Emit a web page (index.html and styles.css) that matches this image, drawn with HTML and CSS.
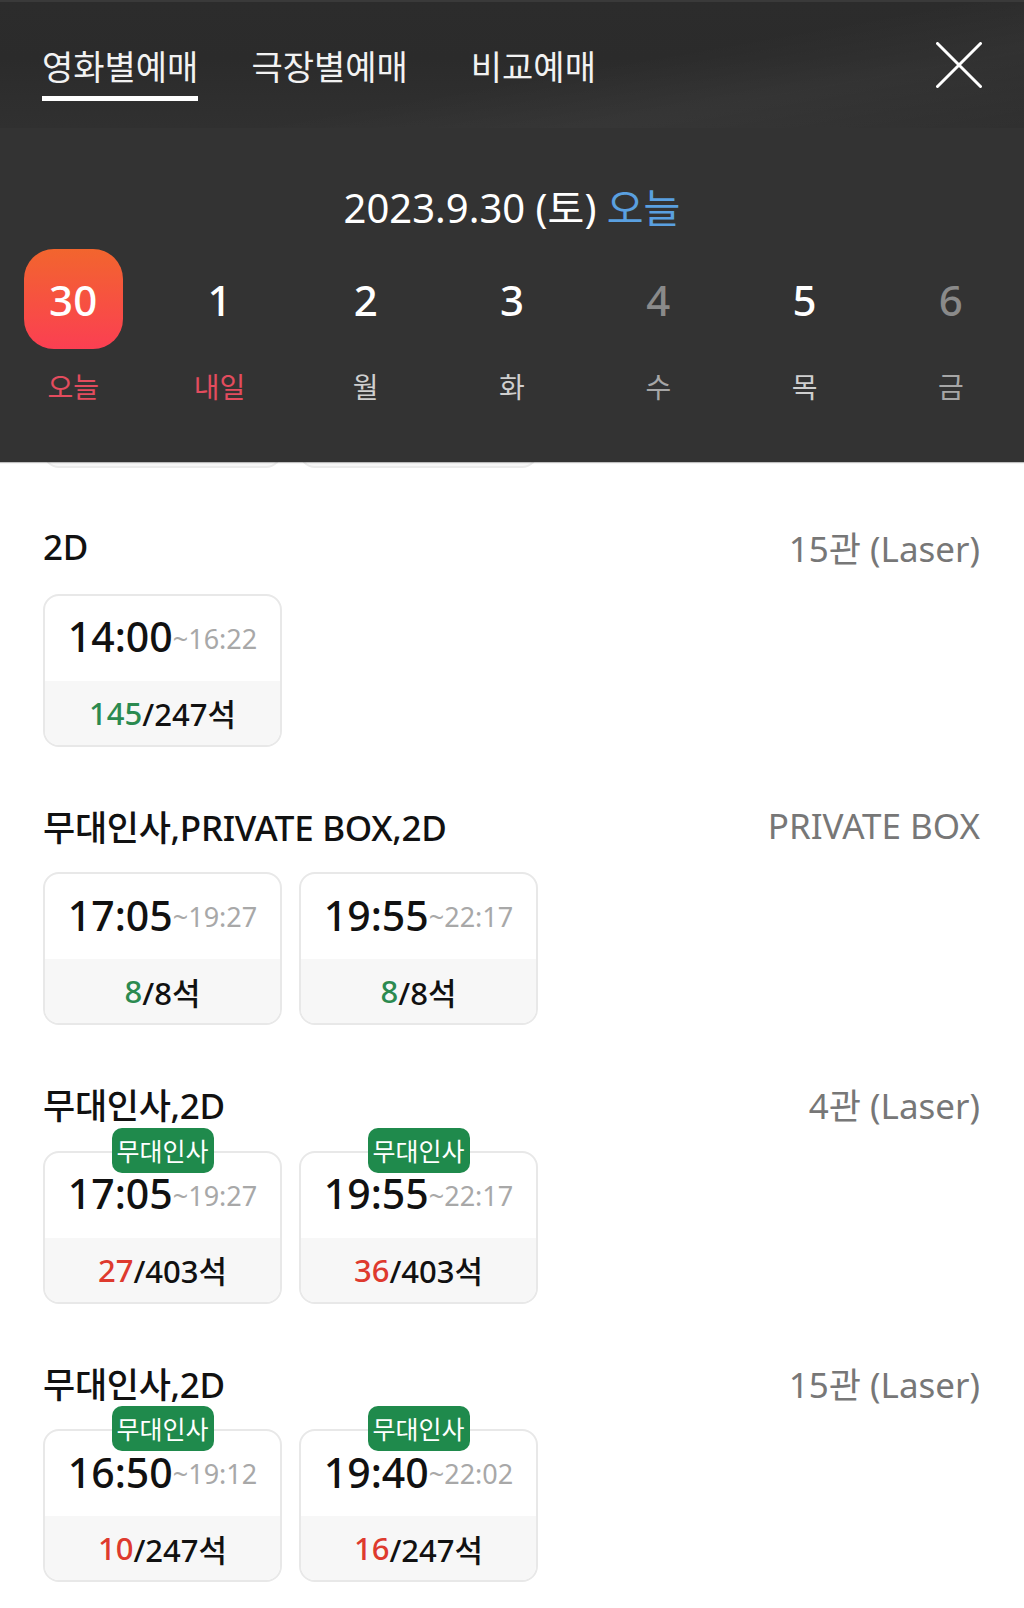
FILE: index.html
```html
<!DOCTYPE html>
<html lang="ko">
<head>
<meta charset="utf-8">
<title>영화별예매</title>
<link rel="stylesheet" href="styles.css">
</head>
<body>
<header class="top">
  <nav class="tabs">
    <a class="tab active">영화별예매</a>
    <a class="tab">극장별예매</a>
    <a class="tab tab-compare">비교예매</a>
    <button class="close" aria-label="닫기">
      <svg width="46" height="46" viewBox="0 0 46 46"><path d="M1.5 1.5 L44.5 44.5 M44.5 1.5 L1.5 44.5" stroke="#fff" stroke-width="3" stroke-linecap="round" fill="none"/></svg>
    </button>
  </nav>
  <div class="date-panel">
    <div class="date-title">2023.9.30 (토) <span class="today">오늘</span></div>
    <ul class="days">
      <li class="day"><span class="num selected">30</span><span class="lbl red">오늘</span></li>
      <li class="day"><span class="num">1</span><span class="lbl red">내일</span></li>
      <li class="day"><span class="num">2</span><span class="lbl">월</span></li>
      <li class="day"><span class="num">3</span><span class="lbl">화</span></li>
      <li class="day off"><span class="num">4</span><span class="lbl">수</span></li>
      <li class="day"><span class="num">5</span><span class="lbl">목</span></li>
      <li class="day off"><span class="num">6</span><span class="lbl">금</span></li>
    </ul>
  </div>
</header>

<main class="content">
  <div class="peek">
    <div class="peek-card"></div>
    <div class="peek-card"></div>
  </div>

  <section class="group">
    <div class="group-head"><h2 class="group-title">2D</h2><span class="hall">15관 (Laser)</span></div>
    <div class="slots">
      <div class="slot">
        <div class="slot-time"><span class="start">14:00</span><span class="end">~16:22</span></div>
        <div class="slot-seat"><span class="avail green">145</span>/247석</div>
      </div>
    </div>
  </section>

  <section class="group">
    <div class="group-head"><h2 class="group-title">무대인사,PRIVATE BOX,2D</h2><span class="hall">PRIVATE BOX</span></div>
    <div class="slots">
      <div class="slot">
        <div class="slot-time"><span class="start">17:05</span><span class="end">~19:27</span></div>
        <div class="slot-seat"><span class="avail green">8</span>/8석</div>
      </div>
      <div class="slot">
        <div class="slot-time"><span class="start">19:55</span><span class="end">~22:17</span></div>
        <div class="slot-seat"><span class="avail green">8</span>/8석</div>
      </div>
    </div>
  </section>

  <section class="group">
    <div class="group-head"><h2 class="group-title">무대인사,2D</h2><span class="hall">4관 (Laser)</span></div>
    <div class="slots">
      <div class="slot">
        <span class="badge">무대인사</span>
        <div class="slot-time"><span class="start">17:05</span><span class="end">~19:27</span></div>
        <div class="slot-seat"><span class="avail red">27</span>/403석</div>
      </div>
      <div class="slot">
        <span class="badge">무대인사</span>
        <div class="slot-time"><span class="start">19:55</span><span class="end">~22:17</span></div>
        <div class="slot-seat"><span class="avail red">36</span>/403석</div>
      </div>
    </div>
  </section>

  <section class="group">
    <div class="group-head"><h2 class="group-title">무대인사,2D</h2><span class="hall">15관 (Laser)</span></div>
    <div class="slots">
      <div class="slot">
        <span class="badge">무대인사</span>
        <div class="slot-time"><span class="start">16:50</span><span class="end">~19:12</span></div>
        <div class="slot-seat"><span class="avail red">10</span>/247석</div>
      </div>
      <div class="slot">
        <span class="badge">무대인사</span>
        <div class="slot-time"><span class="start">19:40</span><span class="end">~22:02</span></div>
        <div class="slot-seat"><span class="avail red">16</span>/247석</div>
      </div>
    </div>
  </section>
</main>
</body>
</html>
```

FILE: styles.css
```css
* { box-sizing: border-box; }

html, body {
  margin: 0;
  padding: 0;
  background: #fff;
}

body {
  font-family: "Noto Sans", "Noto Sans CJK KR", sans-serif;
  color: #111;
  overflow: hidden;
}

/* ---------- header ---------- */
.top {
  background: #333333;
  box-shadow: 0 1px 1px rgba(0,0,0,0.25);
  position: relative;
  z-index: 2;
}

.tabs {
  height: 128px;
  display: flex;
  align-items: flex-start;
  gap: 53px;
  padding: 0 42px;
  background:
    linear-gradient(170deg, rgba(255,255,255,0) 55%, rgba(255,255,255,0.03) 75%, rgba(255,255,255,0) 100%),
    linear-gradient(180deg, #2c2c2c 0%, #2b2b2b 45%, #2e2e2e 75%, #303030 100%);
  border-top: 2px solid #3a3a3a;
}

.tab {
  font-family: "Noto Sans CJK KR", sans-serif;
  font-size: 34px;
  line-height: 42px;
  color: #f2f2f2;
  padding-top: 43px;
  padding-bottom: 9px;
  border-bottom: 5px solid transparent;
  white-space: nowrap;
}

.tab.active {
  border-bottom-color: #fff;
}

.tab-compare {
  margin-left: 10px;
}

.close {
  margin-left: auto;
  margin-top: 40px;
  padding: 0;
  border: 0;
  background: none;
  width: 46px;
  height: 46px;
  display: block;
}

.close svg { display: block; }

.date-panel {
  padding: 58px 0 58px;
}

.date-title {
  text-align: center;
  font-size: 40px;
  line-height: 44px;
  color: #fff;
  margin-bottom: 19px;
}

.today { color: #5aa0e0; }

.days {
  list-style: none;
  margin: 0;
  padding: 0;
  display: flex;
}

.day {
  flex: 1;
  display: flex;
  flex-direction: column;
  align-items: center;
  gap: 19px;
}

.num {
  width: 99px;
  height: 100px;
  display: flex;
  align-items: center;
  justify-content: center;
  font-size: 42px;
  font-weight: 500;
  color: #fff;
  border-radius: 30px;
}

.num.selected {
  background: linear-gradient(180deg, #f2652e 0%, #fb3f52 100%);
}

.lbl {
  font-family: "Noto Sans CJK KR", sans-serif;
  font-size: 28px;
  line-height: 36px;
  color: #cfcfcf;
}

.lbl.red { color: #e34c5e; }

.day.off .num { color: #8a8a8a; }
.day.off .lbl { color: #a6a6a6; }

/* ---------- content ---------- */
.content {
  padding: 0 44px 0 43px;
}

.peek {
  height: 6px;
  overflow: hidden;
  display: flex;
  align-items: flex-end;
  gap: 17px;
}

.peek-card {
  flex: 0 0 239px;
  height: 30px;
  border: 2px solid #ebebeb;
  border-top: 0;
  border-radius: 0 0 16px 16px;
  background: #f7f7f7;
}

.group {
  margin-top: 58.5px;
}

.group-head {
  display: flex;
  justify-content: space-between;
  align-items: center;
  height: 40px;
  margin-bottom: 27px;
}

.group-title {
  margin: 0;
  font-size: 35px;
  font-weight: 500;
  color: #111;
  letter-spacing: -0.3px;
}

.hall {
  font-size: 35px;
  color: #777;
}

.slots {
  display: flex;
  gap: 17px;
}

.slot {
  position: relative;
  width: 239px;
  height: 153px;
  border: 2px solid #e8e8e8;
  border-radius: 16px;
  display: flex;
  flex-direction: column;
  background: #fff;
}

.slot-time {
  height: 85px;
  display: flex;
  justify-content: center;
  align-items: center;
  padding-bottom: 4px;
  white-space: nowrap;
}

.start {
  font-size: 41px;
  font-weight: 500;
  color: #111;
  line-height: 50px;
}

.end {
  font-size: 27px;
  color: #a8a8a8;
  position: relative;
  top: 2px;
}

.slot-seat {
  flex: 1;
  background: #f7f7f7;
  border-radius: 0 0 14px 14px;
  display: flex;
  justify-content: center;
  align-items: center;
  font-size: 31px;
  font-weight: 500;
  color: #111;
}

.avail.green { color: #2b8a50; }
.avail.red { color: #de3a2e; }

.badge {
  position: absolute;
  top: -25px;
  left: 50%;
  transform: translateX(-50%);
  width: 102px;
  height: 45px;
  border-radius: 10px;
  background: #1f8a4c;
  color: #fff;
  font-family: "Noto Sans CJK KR", sans-serif;
  font-size: 25px;
  line-height: 45px;
  text-align: center;
  white-space: nowrap;
}
```
